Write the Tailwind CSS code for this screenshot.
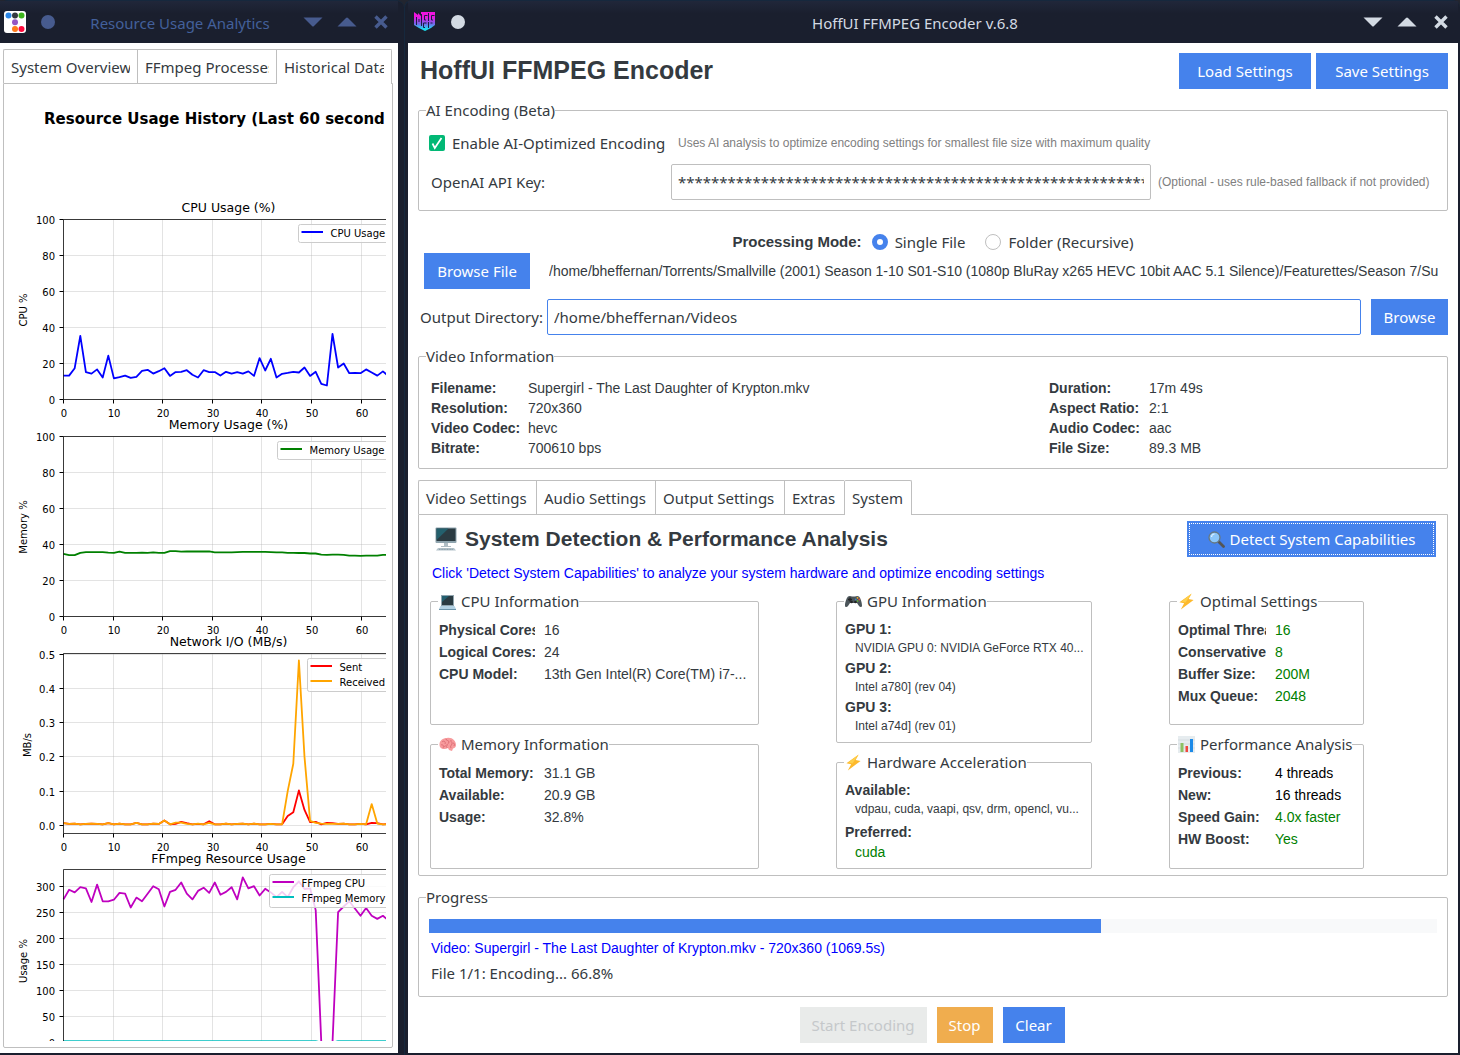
<!DOCTYPE html>
<html lang="en">
<head>
<meta charset="utf-8">
<title>HoffUI FFMPEG Encoder</title>
<script src="https://cdn.jsdelivr.net/npm/@tailwindcss/browser@4"></script>
</head>
<body class="bg-[#22252f] font-['Noto_Sans',sans-serif] text-[15px] leading-5 text-[#343a40]">

<svg class="hidden" aria-hidden="true">
  <symbol id="down" viewBox="0 0 20 10"><path d="M.5 .5h19l-8.500 8.500q-1 1-2 0z" fill="currentColor"/></symbol>
  <symbol id="up" viewBox="0 0 20 10"><path d="M.5 9.500h19L11 1q-1-1-2 0z" fill="currentColor"/></symbol>
  <symbol id="close" viewBox="0 0 14 14"><path d="M1.500 1.500l11 11M12.500 1.500l-11 11" stroke="currentColor" stroke-width="3.400" fill="none"/></symbol>
  <symbol id="bolt" viewBox="0 0 18 18"><path d="M14.500 0.500L1.500 9.800l5 1L3 17.500 16.500 7.300l-5.200-.9z" fill="#fdb92c"/><path d="M14 1L3.500 9l4.500 1z" fill="#fecf4a"/></symbol>
</svg>

<div class="flex min-h-screen">

  <!-- Analytics window -->
  <section class="flex w-[404px] shrink-0 flex-col rounded-t-lg border-t border-[#16283d] bg-[#1a1f2e] pr-[6px] pb-[2px]">
    <header class="flex h-[42px] items-center bg-linear-to-b from-[#20273a] to-[#1a1f2e] to-30% pl-1 text-[#475b8e]">
      <svg class="size-[22px]" viewBox="0 0 22 22"><rect width="22" height="22" rx="3" fill="#fff"/><circle cx="4.500" cy="4.500" r="3" fill="#2b87e8"/><circle cx="11" cy="4.500" r="3" fill="#343a40"/><circle cx="17.500" cy="4.500" r="3" fill="#3eb51c"/><circle cx="11" cy="11.300" r="3" fill="#9455c4"/><circle cx="11" cy="18" r="3" fill="#ff7a1a"/><circle cx="17.500" cy="18" r="3" fill="#ff0a3c"/></svg>
      <span class="ml-[15px] size-[14px] rounded-full bg-[#475b8e]"></span>
      <h1 class="flex-1 pt-[2px] pl-[2px] text-center text-[#43609b]">Resource Usage Analytics</h1>
      <div class="flex items-center gap-[14px] pr-[10px]">
        <button aria-label="Minimize"><svg class="h-[10px] w-5"><use href="#down"/></svg></button>
        <button aria-label="Maximize"><svg class="h-[10px] w-5"><use href="#up"/></svg></button>
        <button aria-label="Close" class="pl-[3px]"><svg class="size-[14px]"><use href="#close"/></svg></button>
      </div>
    </header>
    <div class="flex flex-1 flex-col bg-white pt-[6px] pr-[5px] pb-[5px] pl-[3px]">
      <div role="tablist" class="flex h-[34px] pr-px">
        <button role="tab" class="w-[134px] overflow-hidden rounded-tl-xs border-t border-l border-[#bfbfbf] px-[7px]"><span class="block overflow-hidden text-left whitespace-nowrap">System Overview</span></button>
        <button role="tab" class="w-[139px] overflow-hidden border-t border-l border-[#bfbfbf] px-[7px]"><span class="block overflow-hidden text-left whitespace-nowrap">FFmpeg Processes</span></button>
        <button role="tab" aria-selected="true" class="relative z-10 -mb-px w-[116px] rounded-tr-xs border-x border-t border-[#bfbfbf] bg-white px-[7px]"><span class="block overflow-hidden text-left whitespace-nowrap">Historical Data</span></button>
      </div>
      <div class="flex flex-1 flex-col rounded-b-xs border border-[#bfbfbf] pr-[6px] pb-[6px]">
        <div class="h-0 flex-[1_1_0px] overflow-hidden font-['DejaVu_Sans',sans-serif] text-black">
          <h2 class="h-[115px] overflow-hidden pt-[23px] pl-10 text-[15px] leading-6 font-bold whitespace-nowrap">Resource Usage History (Last 60 second</h2>
          <div id="charts"></div>
        </div>
      </div>
    </div>
  </section>

  <!-- Encoder window -->
  <section class="flex min-w-0 flex-1 flex-col rounded-t-lg border-t border-l border-[#16283d] bg-[#1a1f2e] pr-[2px] pb-[2px] pl-[3px]">
    <header class="flex h-[42px] items-center bg-linear-to-b from-[#20273a] to-[#1a1f2e] to-30% pl-[6px] text-[#d3dae3]">
      <svg class="size-[22px]" viewBox="0 0 22 22"><defs><linearGradient id="logo" x1="0" y1="0" x2="0" y2="1"><stop offset=".25" stop-color="#f014e0"/><stop offset=".6" stop-color="#7a60e8"/><stop offset=".9" stop-color="#18e0f0"/></linearGradient></defs><path d="M0 1l4 3V2l3 3V1h14v13l-4 3-6 3-6-3-5-3z" fill="url(#logo)"/><path d="M2.500 6v8M5 8v3M7.500 3v12M13.500 4.500h-3v4.500h1.500M14.500 2v8M20.500 4.500h-3v4.500H19M12.500 12H9.500v4.500h1.500M14.500 11v6M18.500 12h-2" stroke="#1d1a42" stroke-width="1" fill="none"/></svg>
      <span class="ml-[15px] size-[14px] rounded-full bg-[#d3dae3]"></span>
      <h1 class="flex-1 pt-[2px] pl-[2px] text-center">HoffUI FFMPEG Encoder v.6.8</h1>
      <div class="flex items-center gap-[14px] pr-[10px]">
        <button aria-label="Minimize"><svg class="h-[10px] w-5"><use href="#down"/></svg></button>
        <button aria-label="Maximize"><svg class="h-[10px] w-5"><use href="#up"/></svg></button>
        <button aria-label="Close" class="pl-[3px]"><svg class="size-[14px]"><use href="#close"/></svg></button>
      </div>
    </header>

    <main class="flex-1 bg-white px-[10px] py-[10px]">
      <div class="flex h-9 items-center gap-[5px]">
        <h2 class="flex-1 pb-[2px] pl-[2px] font-['Liberation_Sans',sans-serif] text-[25px] leading-8 font-bold">HoffUI FFMPEG Encoder</h2>
        <button class="h-9 w-[132px] bg-[#4582ec] text-white">Load Settings</button>
        <button class="h-9 w-[132px] bg-[#4582ec] text-white">Save Settings</button>
      </div>

      <fieldset class="mt-[11px] rounded-xs border border-[#bfbfbf] px-[7px] pb-[10px]">
        <legend>AI Encoding (Beta)</legend>
        <div class="mt-3 ml-[3px] flex h-[22px] items-center">
          <label class="flex w-[249px] items-center gap-[7px]">
            <span class="grid">
              <input type="checkbox" checked class="col-start-1 row-start-1 size-4 appearance-none rounded-xs bg-[#02b875]">
              <svg class="pointer-events-none col-start-1 row-start-1 size-4" viewBox="0 0 16 16"><path d="M3.500 8.500l2.300 4.500L12.500 3" stroke="#fff" stroke-width="1.700" fill="none"/></svg>
            </span>
            Enable AI-Optimized Encoding
          </label>
          <span class="font-['Liberation_Sans',sans-serif] text-xs text-[#808080]">Uses AI analysis to optimize encoding settings for smallest file size with maximum quality</span>
        </div>
        <div class="mt-[10px] flex h-9 items-center pr-1 pl-[5px]">
          <label for="key" class="w-60">OpenAI API Key:</label>
          <input id="key" type="text" value="************************************************************" class="h-9 min-w-0 flex-1 rounded-xs border border-[#bfbfbf] px-[6px]">
          <span class="ml-[7px] w-[278px] shrink-0 font-['Liberation_Sans',sans-serif] text-xs text-[#808080]">(Optional - uses rule-based fallback if not provided)</span>
        </div>
      </fieldset>

      <div class="mt-5 flex h-[22px] items-center justify-center">
        <span class="mr-[10px] font-['Liberation_Sans',sans-serif] font-bold">Processing Mode:</span>
        <label class="mr-5 flex items-center gap-[7px]"><input type="radio" name="mode" checked class="size-4 appearance-none rounded-full border-[5px] border-[#4582ec]">Single File</label>
        <label class="flex items-center gap-[7px]"><input type="radio" name="mode" class="size-4 appearance-none rounded-full border border-[#bfbfbf]">Folder (Recursive)</label>
      </div>

      <div class="flex h-9 items-center pr-[2px] pl-[6px]">
        <button class="h-9 w-[106px] shrink-0 bg-[#4582ec] text-white">Browse File</button>
        <span class="ml-[19px] flex-1 overflow-hidden font-['Liberation_Sans',sans-serif] text-sm whitespace-nowrap">/home/bheffernan/Torrents/Smallville (2001) Season 1-10 S01-S10 (1080p BluRay x265 HEVC 10bit AAC 5.1 Silence)/Featurettes/Season 7/Su</span>
      </div>

      <div class="mt-[10px] flex h-9 items-center pl-[2px]">
        <label for="out" class="w-[127px]">Output Directory:</label>
        <input id="out" type="text" value="/home/bheffernan/Videos" class="h-9 min-w-0 flex-1 rounded-xs border border-[#4582ec] px-[6px]">
        <button class="ml-[10px] h-9 w-[77px] bg-[#4582ec] text-white">Browse</button>
      </div>

      <fieldset class="mt-[11px] rounded-xs border border-[#bfbfbf] px-[7px] pb-[10px]">
        <legend>Video Information</legend>
        <dl class="mt-3 ml-[5px] grid grid-cols-[97px_521fr_100px_291fr] font-['Liberation_Sans',sans-serif] text-sm">
          <dt class="font-bold">Filename:</dt><dd>Supergirl - The Last Daughter of Krypton.mkv</dd><dt class="font-bold">Duration:</dt><dd>17m 49s</dd>
          <dt class="font-bold">Resolution:</dt><dd>720x360</dd><dt class="font-bold">Aspect Ratio:</dt><dd>2:1</dd>
          <dt class="font-bold">Video Codec:</dt><dd>hevc</dd><dt class="font-bold">Audio Codec:</dt><dd>aac</dd>
          <dt class="font-bold">Bitrate:</dt><dd>700610 bps</dd><dt class="font-bold">File Size:</dt><dd>89.3 MB</dd>
        </dl>
      </fieldset>

      <div role="tablist" class="mt-[11px] flex h-[34px]">
        <button role="tab" class="w-[118px] rounded-tl-xs border-t border-l border-[#bfbfbf] pt-px pl-[7px] text-left whitespace-nowrap">Video Settings</button>
        <button role="tab" class="w-[119px] border-t border-l border-[#bfbfbf] pt-px pl-[7px] text-left whitespace-nowrap">Audio Settings</button>
        <button role="tab" class="w-[129px] border-t border-l border-[#bfbfbf] pt-px pl-[7px] text-left whitespace-nowrap">Output Settings</button>
        <button role="tab" class="w-[60px] border-t border-l border-[#bfbfbf] pt-px pl-[7px] text-left">Extras</button>
        <button role="tab" aria-selected="true" class="relative z-10 -mb-px w-[68px] rounded-t-xs border-x border-t border-[#bfbfbf] bg-white pl-[7px] text-left">System</button>
      </div>
      <div class="rounded-b-xs border border-[#bfbfbf] px-[11px] pt-[6px] pb-[6px]">
        <div class="flex h-9 items-center">
          <svg class="ml-1 h-6 w-6" viewBox="-1 0 24 24"><rect x=".5" y=".5" width="21" height="15.500" rx="1" fill="#8fa4ae"/><rect x="1.500" y="1.500" width="19" height="12.500" fill="#2b3b42"/><path d="M1.500 1.500h12L1.500 13z" fill="#24606d"/><path d="M9 16h4v3h3v1H6v-1h3z" fill="#b0bec5"/><path d="M3 21h16l2 2.500H1z" fill="#b5c4cc"/><path d="M4 22.300h14" stroke="#718792" stroke-width=".7" stroke-dasharray="1 .6"/></svg>
          <h3 class="ml-[7px] flex-1 font-['Liberation_Sans',sans-serif] text-[21px] leading-9 font-bold">System Detection &amp; Performance Analysis</h3>
          <button class="h-9 w-[249px] bg-[#4582ec] p-[2px] text-white">
            <span class="flex h-8 items-center justify-center gap-[5px] border border-dotted border-white whitespace-nowrap">
              <svg class="size-[17px]" viewBox="0 0 17 17"><path d="M10 10l5.500 5.500" stroke="#555" stroke-width="2.800" stroke-linecap="round"/><circle cx="6.500" cy="6.500" r="5.500" fill="#8bc6fa" stroke="#667780" stroke-width="1.300"/><path d="M3.500 6a3 3 0 0 1 3-3" stroke="#e1f2ff" stroke-width="1.200" fill="none"/></svg>
              Detect System Capabilities
            </span>
          </button>
        </div>
        <p class="mt-[6px] pl-[2px] font-['Liberation_Sans',sans-serif] text-sm text-[#0000ff]">Click 'Detect System Capabilities' to analyze your system hardware and optimize encoding settings</p>

        <div class="mt-2 grid grid-cols-[406fr_333fr_267fr] font-['Liberation_Sans',sans-serif] text-sm leading-[22px]">
          <div class="flex w-[329px] flex-col gap-[9px]">
            <fieldset class="h-[134px] rounded-xs border border-[#bfbfbf] px-2">
              <legend class="-ml-px flex items-center gap-[5px] pl-px font-['Noto_Sans',sans-serif] text-[15px] leading-5">
                <svg class="size-[17px]" viewBox="0 0 17 17"><path d="M2 2h13v11H2z" fill="#90a4ae"/><path d="M3 3h11v9H3z" fill="#2a3b42"/><path d="M3 3h7l-7 6z" fill="#246070"/><path d="M1.500 13h14l1.500 3H0z" fill="#b3d2e4"/><path d="M0 16h17v1H0z" fill="#6b94aa"/></svg>
                CPU Information
              </legend>
              <dl class="mt-2 grid grid-cols-[96px_1fr] gap-x-[9px]">
                <dt class="overflow-hidden font-bold whitespace-nowrap">Physical Cores:</dt><dd>16</dd>
                <dt class="overflow-hidden font-bold whitespace-nowrap">Logical Cores:</dt><dd>24</dd>
                <dt class="font-bold">CPU Model:</dt><dd class="whitespace-nowrap">13th Gen Intel(R) Core(TM) i7-...</dd>
              </dl>
            </fieldset>
            <fieldset class="h-[135px] rounded-xs border border-[#bfbfbf] px-2">
              <legend class="-ml-px flex items-center gap-[5px] pl-px font-['Noto_Sans',sans-serif] text-[15px] leading-5">
                <svg class="size-[17px]" viewBox="0 0 17 17"><path d="M1 11C-1 6 3 2 8 2c5-1 9 3 9 7 0 2-1 3-3 3.500l-1 2.500-3-1-1-2C6 14 2 13 1 11z" fill="#f79a9c"/><path d="M3 6c2-2 4 0 3 2M7 3c0 2 3 1 3 3s-3 2-2 4M12 4c-1 2 2 2 1 4s-2 2-1 4M2 9c2-1 3 1 2 3M5 11c1-2 3-1 3 1M14 7c1 0 2 1 1 3" stroke="#d96a72" stroke-width=".9" fill="none"/></svg>
                Memory Information
              </legend>
              <dl class="mt-2 grid grid-cols-[96px_1fr] gap-x-[9px]">
                <dt class="font-bold whitespace-nowrap">Total Memory:</dt><dd>31.1 GB</dd>
                <dt class="font-bold">Available:</dt><dd>20.9 GB</dd>
                <dt class="font-bold">Usage:</dt><dd>32.8%</dd>
              </dl>
            </fieldset>
          </div>

          <div class="flex w-[256px] flex-col gap-[9px]">
            <fieldset class="h-[152px] min-w-0 rounded-xs border border-[#bfbfbf] px-2">
              <legend class="-ml-px flex items-center gap-[5px] pl-px font-['Noto_Sans',sans-serif] text-[15px] leading-5">
                <svg class="size-[17px]" viewBox="0 0 17 17"><path d="M3 3.500c1.500-1 3-.5 4 0h3c1-.5 2.500-1 4 0 1.500 1.500 3 6 3 9 0 2-2 2-3 .5L12 10H5l-2 3c-1 1.500-3 1.500-3-.5 0-3 1.500-7.500 3-9z" fill="#4b555a"/><path d="M3 6.500h4M5 4.500v4" stroke="#222" stroke-width="1.300"/><circle cx="6.500" cy="9" r="1.300" fill="#222"/><circle cx="10.500" cy="9" r="1.300" fill="#222"/><circle cx="12.500" cy="4.800" r=".9" fill="#f9b326"/><circle cx="14.300" cy="6.500" r=".9" fill="#e5533d"/><circle cx="10.800" cy="6.500" r=".9" fill="#3b83c0"/><circle cx="12.500" cy="8" r=".9" fill="#65a83a"/></svg>
                GPU Information
              </legend>
              <dl class="mt-2 leading-5 whitespace-nowrap">
                <dt class="font-bold">GPU 1:</dt><dd class="pl-[10px] text-xs leading-[19px]">NVIDIA GPU 0: NVIDIA GeForce RTX 40...</dd>
                <dt class="font-bold">GPU 2:</dt><dd class="pl-[10px] text-xs leading-[19px]">Intel a780] (rev 04)</dd>
                <dt class="font-bold">GPU 3:</dt><dd class="pl-[10px] text-xs leading-[19px]">Intel a74d] (rev 01)</dd>
              </dl>
            </fieldset>
            <fieldset class="h-[117px] min-w-0 rounded-xs border border-[#bfbfbf] px-2">
              <legend class="-ml-px flex items-center gap-[5px] pl-px font-['Noto_Sans',sans-serif] text-[15px] leading-5">
                <svg class="size-[17px]"><use href="#bolt"/></svg>
                Hardware Acceleration
              </legend>
              <dl class="mt-2 leading-5 whitespace-nowrap">
                <dt class="font-bold">Available:</dt><dd class="mb-[3px] pl-[10px] text-xs leading-[19px]">vdpau, cuda, vaapi, qsv, drm, opencl, vu...</dd>
                <dt class="font-bold">Preferred:</dt><dd class="pl-[10px] text-[green]">cuda</dd>
              </dl>
            </fieldset>
          </div>

          <div class="flex w-[195px] flex-col gap-[9px]">
            <fieldset class="h-[134px] rounded-xs border border-[#bfbfbf] px-2">
              <legend class="-ml-px flex items-center gap-[5px] pl-px font-['Noto_Sans',sans-serif] text-[15px] leading-5">
                <svg class="size-[17px]"><use href="#bolt"/></svg>
                Optimal Settings
              </legend>
              <dl class="mt-2 grid grid-cols-[88px_1fr] gap-x-[9px]">
                <dt class="overflow-hidden font-bold whitespace-nowrap">Optimal Threads:</dt><dd class="text-[green]">16</dd>
                <dt class="overflow-hidden font-bold whitespace-nowrap">Conservative:</dt><dd class="text-[green]">8</dd>
                <dt class="font-bold">Buffer Size:</dt><dd class="text-[green]">200M</dd>
                <dt class="font-bold">Mux Queue:</dt><dd class="text-[green]">2048</dd>
              </dl>
            </fieldset>
            <fieldset class="h-[135px] rounded-xs border border-[#bfbfbf] px-2">
              <legend class="-ml-px flex items-center gap-[5px] pl-px font-['Noto_Sans',sans-serif] text-[15px] leading-5 whitespace-nowrap">
                <svg class="size-[17px]" viewBox="0 0 17 17"><rect width="17" height="17" fill="#e6ecef"/><path d="M0 4h17M0 8h17M0 12h17" stroke="#cfd8dc" stroke-width=".7"/><path d="M2.500 7h3v9h-3z" fill="#8cc063"/><path d="M7.500 10h2.500v6H7.500z" fill="#f0483e"/><path d="M12 3h3v13h-3z" fill="#1c8ae8"/></svg>
                Performance Analysis
              </legend>
              <dl class="mt-2 grid grid-cols-[88px_1fr] gap-x-[9px]">
                <dt class="font-bold">Previous:</dt><dd class="text-black">4 threads</dd>
                <dt class="font-bold">New:</dt><dd class="text-black">16 threads</dd>
                <dt class="font-bold">Speed Gain:</dt><dd class="text-[green]">4.0x faster</dd>
                <dt class="font-bold">HW Boost:</dt><dd class="text-[green]">Yes</dd>
              </dl>
            </fieldset>
          </div>
        </div>
      </div>

      <fieldset class="mt-[11px] rounded-xs border border-[#bfbfbf] px-[7px] pb-[13px]">
        <legend>Progress</legend>
        <div role="progressbar" aria-valuenow="66.8" aria-label="Encoding progress" class="mx-[3px] mt-3 h-[14px] bg-[#f8f9fa]">
          <div class="h-full bg-[#4582ec]" style="width:66.7%"></div>
        </div>
        <p class="mt-[5px] pl-[5px] font-['Liberation_Sans',sans-serif] text-sm text-[#0000ff]">Video: Supergirl - The Last Daughter of Krypton.mkv - 720x360 (1069.5s)</p>
        <p class="mt-[5px] pl-[5px]">File 1/1: Encoding... 66.8%</p>
      </fieldset>

      <div class="mt-[10px] flex justify-center gap-[10px] pr-[2px]">
        <button disabled class="h-9 w-[127px] bg-[#e9ebea] text-[#c5c8ca]">Start Encoding</button>
        <button class="h-9 w-14 bg-[#f0ad4e] text-white">Stop</button>
        <button class="h-9 w-[62px] bg-[#4582ec] text-white">Clear</button>
      </div>
    </main>
  </section>
</div>

<script>
// Each figure is 217px tall; the axes box starts at x=59.5, y=20.5 inside it.
const LEFT = 59.5, TOP = 20.5, RIGHT = 400, BOTTOM = 200.5, STEP = 5.604, DECADE = 49.6;
const flat = [.006,.004,.005,.003,.004,.005,.004,.003,.006,.003,.005,.003,.003,.007,.003,.003,.005,.004];
const charts = [
  { title: 'CPU Usage (%)', tx: 224, label: 'CPU %', lx: 23, ly: 111, y0: 200.5, unit: 1.8,
    ticks: [0, 20, 40, 60, 80, 100], legendX: 294.5,
    series: [{ name: 'CPU Usage', color: '#0000ff', data: [13.3,13.3,17.4,35.4,15.2,14.4,16.7,12.2,24.4,11.7,12.4,13.3,12,12.6,15.9,16.5,14.4,15.7,17.4,13.1,15.2,15.4,16.3,13.7,12.2,16.3,15.2,15.2,13.3,15.4,14.4,15.2,14.4,15.6,13.1,23,16.1,22.6,12.2,14.3,14.8,15.4,15,17.8,13.1,15.4,8.7,7.8,36.5,17.8,20,14.6,14.8,14.6,16.7,15,13.3,15.6,13] }] },
  { title: 'Memory Usage (%)', tx: 224, label: 'Memory %', lx: 23, ly: 111, y0: 200.5, unit: 1.8,
    ticks: [0, 20, 40, 60, 80, 100], legendX: 273.5,
    series: [{ name: 'Memory Usage', color: '#008000', data: [34.8,34.1,34.1,35.4,35.8,35.8,35.8,35.8,35.5,35.4,36,35.4,35.4,35.4,35.5,35.4,35.6,35.4,35.4,36.3,36.3,36,36.1,36.1,36.1,36.1,36.2,35.6,35.6,35.6,35.6,35.7,35.9,35.9,35.9,35.9,35.9,35.8,35.6,35.6,35.4,35.4,35.3,35.3,35,35,34.4,34.3,34.4,34.4,34.3,33.8,33.8,33.7,33.8,33.8,33.8,34.2,34.3] }] },
  { title: 'Network I/O (MB/s)', tx: 224, label: 'MB/s', lx: 27, ly: 112, y0: 192.3, unit: 342,
    ticks: [0, .1, .2, .3, .4, .5], digits: 1, legendX: 303.5,
    series: [
      { name: 'Sent', color: '#ff0000', data: [...flat,.014,.003,.004,.01,.006,.003,.004,.003,.012,.003,.003,.005,.003,.004,.005,.003,.005,.003,.003,.004,.003,.003,.027,.038,.102,.045,.009,.01,.003,.007,.006,.004,.005,.003,.003,.004,.003,.007,.006,.003,.004] },
      { name: 'Received', color: '#ffa500', data: [...flat,.014,.003,.008,.008,.004,.003,.005,.003,.007,.003,.003,.005,.003,.004,.005,.003,.005,.003,.003,.004,.003,.003,.1,.18,.482,.2,.013,.007,.005,.004,.004,.004,.005,.003,.003,.004,.003,.062,.005,.003,.003] }] },
  { title: 'FFmpeg Resource Usage', tx: 224, label: 'Usage %', lx: 23, ly: 111, y0: 192.7, unit: .52, top: 19.5,
    ticks: [0, 50, 100, 150, 200, 250, 300], legendX: 265.5,
    series: [
      { name: 'FFmpeg CPU', color: '#bf00bf', data: [275.6,294,289,299,297,270.5,304,272,272,275,288,286.5,260,279,272,286.5,301,295,262,290,294,308,286.5,275.6,292,298,288,308,284.6,290,299,275.6,318,297,301,283,296,289,280,290,280,299,310,295.5,297,255,0,0,0,251,262,272,258,244,259,244,238,244,235] },
      { name: 'FFmpeg Memory', color: '#00bfbf', data: [3,3,3,3,3,3,3,3,3,3,3,3,3,3,3,3,3,3,3,3,3,3,3,3,3,3,3,3,3,3,3,3,3,3,3,3,3,3,3,3,3,3,3,3,3,3,0,0,0,3,3,3,3,3,3,3,3,3,3] }] },
];

document.getElementById('charts').innerHTML = charts.map(c => {
  const top = c.top || TOP;
  let s = '';
  for (let i = 0; i <= 6; i++) {
    const x = Math.floor(LEFT + i * DECADE) + .5;
    s += `<path d="M${x} ${top}V${BOTTOM}" stroke="#b0b0b0" stroke-opacity=".35"/><path d="M${x} ${BOTTOM}v4" stroke="#000"/>`;
    s += `<text x="${x + .5}" y="218" text-anchor="middle">${i * 10}</text>`;
  }
  for (const t of c.ticks) {
    const y = Math.floor(c.y0 - t * c.unit) + .5;
    s += `<path d="M${LEFT} ${y}H${RIGHT}" stroke="#b0b0b0" stroke-opacity=".35"/><path d="M${LEFT} ${y}h-4" stroke="#000"/>`;
    s += `<text x="51" y="${y + 4}" text-anchor="end">${t.toFixed(c.digits || 0)}</text>`;
  }
  for (const l of c.series) {
    const pts = l.data.map((v, i) => `${(LEFT + i * STEP).toFixed(1)},${(c.y0 - v * c.unit).toFixed(1)}`).join(' ');
    s += `<polyline points="${pts}" fill="none" stroke="${l.color}" stroke-width="1.8" stroke-linejoin="round"/>`;
  }
  s += `<path d="M${RIGHT} ${top}H${LEFT}V${BOTTOM}H${RIGHT}" fill="none" stroke="#000" stroke-opacity=".75"/>`;
  const n = c.series.length;
  s += `<rect x="${c.legendX}" y="${top + 5}" width="120" height="${n * 15 + 3}" rx="2" fill="#fff" fill-opacity=".8" stroke="#ccc"/>`;
  c.series.forEach((l, i) => {
    const y = top + 13 + i * 15;
    s += `<path d="M${c.legendX + 3} ${y - .5}h21.5" stroke="${l.color}" stroke-width="2"/>`;
    s += `<text x="${c.legendX + 32}" y="${y + 4}">${l.name}</text>`;
  });
  s += `<text x="${c.tx + .5}" y="13" font-size="12.500" text-anchor="middle">${c.title}</text>`;
  s += `<text transform="translate(${c.lx} ${c.ly}) rotate(-90)" text-anchor="middle">${c.label}</text>`;
  return `<svg class="block h-[217px] w-[400px] overflow-visible" font-size="10">${s}</svg>`;
}).join('');
</script>
</body>
</html>
